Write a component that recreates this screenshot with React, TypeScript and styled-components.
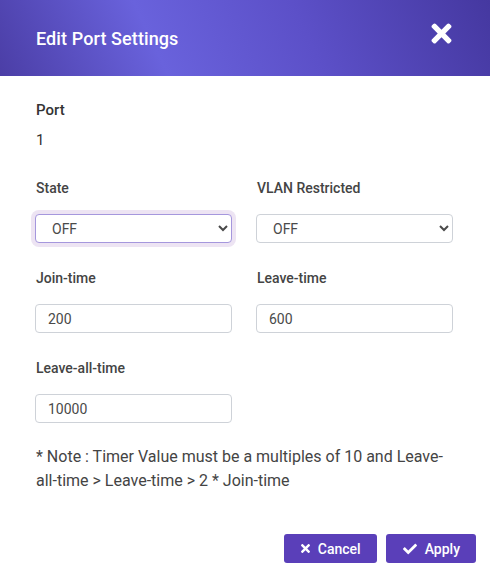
import styled, { createGlobalStyle, css } from 'styled-components';
import { FaTimes, FaCheck } from 'react-icons/fa';

const GlobalStyle = createGlobalStyle`
  html, body {
    margin: 0;
    padding: 0;
    background: #ffffff;
  }
  body {
    font-family: Roboto, 'Liberation Sans', sans-serif;
  }
`;

const App = () => {
  return (
    <>
      <GlobalStyle />
      <Modal>
        <Header>
          <Title>Edit Port Settings</Title>
          <CloseButton aria-label="close">
            <FaTimes />
          </CloseButton>
        </Header>

        <Body>
          <PortBlock>
            <PortLabel>Port</PortLabel>
            <PortValue>1</PortValue>
          </PortBlock>

          <Grid>
            <Field>
              <Label>State</Label>
              <Select defaultValue="off" $focused>
                <option value="off">OFF</option>
                <option value="on">ON</option>
              </Select>
            </Field>
            <Field>
              <Label>VLAN Restricted</Label>
              <Select defaultValue="off">
                <option value="off">OFF</option>
                <option value="on">ON</option>
              </Select>
            </Field>
            <Field>
              <Label>Join-time</Label>
              <Input defaultValue="200" />
            </Field>
            <Field>
              <Label>Leave-time</Label>
              <Input defaultValue="600" />
            </Field>
            <Field>
              <Label>Leave-all-time</Label>
              <Input defaultValue="10000" />
            </Field>
          </Grid>

          <Note>
            * Note : Timer Value must be a multiples of 10 and Leave-all-time &gt;
            Leave-time &gt; 2 * Join-time
          </Note>
        </Body>

        <Footer>
          <Button>
            <CancelIcon />
            Cancel
          </Button>
          <Button>
            <FaCheck size={14} />
            Apply
          </Button>
        </Footer>
      </Modal>
    </>
  );
};

export default App;

const Modal = styled.div`
  width: 490px;
  height: 574px;
  background: #ffffff;
  display: flex;
  flex-direction: column;
  overflow: hidden;
`;

const Header = styled.div`
  height: 76px;
  box-sizing: border-box;
  padding: 0 34px 0 36px;
  display: flex;
  align-items: center;
  justify-content: space-between;
  background: linear-gradient(
    65deg,
    #4b3ea6 0%,
    #6962dc 32%,
    #5c50c8 62%,
    #4538a0 100%
  );
`;

const Title = styled.h1`
  margin: 0;
  font-size: 18px;
  font-weight: 500;
  color: #ffffff;
  letter-spacing: 0.1px;
`;

const CloseButton = styled.button`
  border: none;
  background: none;
  padding: 0;
  margin-bottom: 9px;
  color: #ffffff;
  display: flex;
  font-size: 29px;
  cursor: pointer;
`;

const Body = styled.div`
  padding: 24px 37px 0 35px;
  flex: 1;
`;

const PortBlock = styled.div`
  padding-left: 1px;
  margin-bottom: 30px;
`;

const PortLabel = styled.div`
  font-size: 15px;
  font-weight: 500;
  color: #333333;
  line-height: 20px;
`;

const PortValue = styled.div`
  font-size: 15px;
  color: #333333;
  line-height: 20px;
  margin-top: 10px;
`;

const Grid = styled.div`
  display: grid;
  grid-template-columns: 197px 197px;
  column-gap: 24px;
  row-gap: 27px;
`;

const Field = styled.div`
  display: flex;
  flex-direction: column;
`;

const Label = styled.label`
  font-size: 14px;
  font-weight: 500;
  color: #444444;
  line-height: 17px;
  padding-left: 1px;
  margin-bottom: 17px;
`;

const controlStyles = css`
  box-sizing: border-box;
  width: 197px;
  height: 29px;
  border: 1px solid #ced2d8;
  border-radius: 4px;
  background: #ffffff;
  font-family: Roboto, 'Liberation Sans', sans-serif;
  font-size: 14px;
  color: #4a4a4a;
  outline: none;
`;

const Select = styled.select<{ $focused?: boolean }>`
  ${controlStyles};
  padding: 0 6px 0 12px;

  ${({ $focused }) =>
    $focused &&
    css`
      border-color: #a597dd;
      box-shadow: 0 0 0 4px #ede4f3;
    `}
`;

const Input = styled.input`
  ${controlStyles};
  padding: 0 12px;
`;

const Note = styled.p`
  margin: 22px 0 0 1px;
  font-size: 16px;
  line-height: 24px;
  color: #444444;
`;

const Footer = styled.div`
  display: flex;
  justify-content: flex-end;
  gap: 9px;
  padding: 0 14px 11px 0;
`;

const Button = styled.button`
  height: 29px;
  box-sizing: border-box;
  padding: 0 16px 0 17px;
  display: flex;
  align-items: center;
  gap: 8px;
  border: none;
  border-radius: 3px;
  background: #5a3fb9;
  color: #ffffff;
  font-family: Roboto, 'Liberation Sans', sans-serif;
  font-size: 14px;
  font-weight: 500;
  cursor: pointer;
`;

const CancelIcon = styled(FaTimes)`
  width: 9px;
  height: 13px;
`;
